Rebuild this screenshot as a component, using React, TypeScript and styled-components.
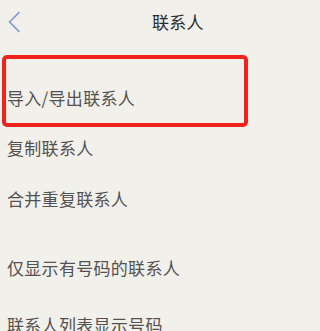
import React from "react";
import styled, { createGlobalStyle } from "styled-components";

const GlobalStyle = createGlobalStyle`
  html, body {
    margin: 0;
    padding: 0;
    background: #f2f0eb;
  }
  body {
    font-family: "Noto Sans CJK SC", "Noto Sans", sans-serif;
    overflow: hidden;
  }
`;

const Page = styled.div`
  width: 249px;
  height: 331px;
  overflow: hidden;
  background: #f2f0eb;
`;

const Header = styled.header`
  display: flex;
  align-items: center;
  height: 44px;
  padding-left: 7px;
  margin-bottom: 11px;
`;

const BackButton = styled.button`
  display: flex;
  align-items: center;
  justify-content: center;
  width: 14px;
  height: 22px;
  padding: 0;
  border: none;
  background: none;
  color: #7f98dd;
`;

const Title = styled.h1`
  margin: 0 0 0 131px;
  font-size: 17px;
  font-weight: 400;
  line-height: 24px;
  color: #2b2b2b;
  letter-spacing: 0.2px;
`;

const Highlight = styled.div`
  margin: 0 1px 0 2px;
  padding: 26.5px 0 13.5px 1px;
  border: 4px solid #f2231c;
  border-radius: 5px;
`;

const Row = styled.div<{ $gap?: number }>`
  margin-top: ${({ $gap }) => $gap ?? 0}px;
  padding-left: 7px;
  font-size: 17px;
  line-height: 24px;
  color: #525252;
  letter-spacing: 0.3px;
  white-space: nowrap;
`;

const HighlightRow = styled(Row)`
  padding-left: 0;
`;

export default function App() {
  return (
    <>
      <GlobalStyle />
      <Page>
        <Header>
          <BackButton aria-label="back">
            <svg width="14" height="22" viewBox="0 0 14 22" fill="none">
              <polyline
                points="12,1.5 2.5,11 12,20.5"
                stroke="currentColor"
                strokeWidth="1.7"
                strokeLinecap="round"
                strokeLinejoin="round"
              />
            </svg>
          </BackButton>
          <Title>联系人</Title>
        </Header>
        <Highlight>
          <HighlightRow>导入/导出联系人</HighlightRow>
        </Highlight>
        <Row $gap={9}>复制联系人</Row>
        <Row $gap={27}>合并重复联系人</Row>
        <Row $gap={45}>仅显示有号码的联系人</Row>
        <Row $gap={33}>联系人列表显示号码</Row>
      </Page>
    </>
  );
}
